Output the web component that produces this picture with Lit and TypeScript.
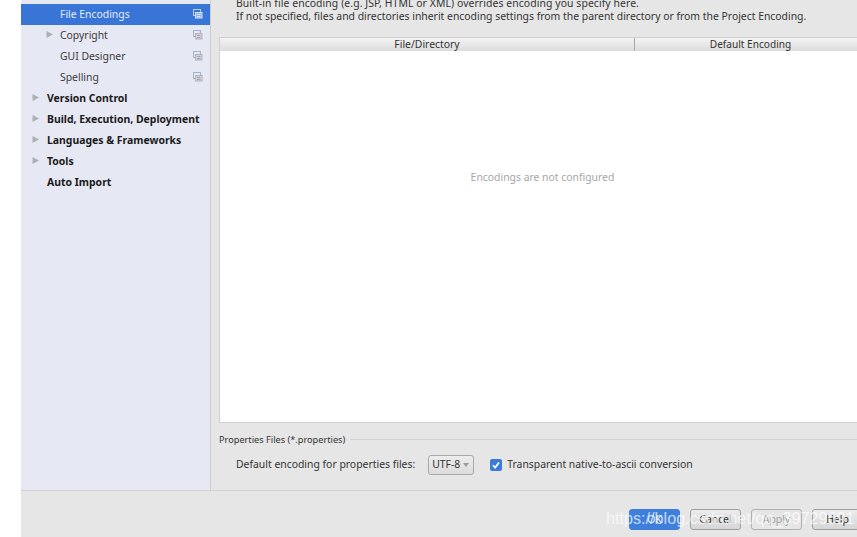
import { LitElement, html, css, svg } from "lit";
import { customElement } from "lit/decorators.js";

const copyIcon = (sel: boolean) => html`<svg class="copy" width="10" height="10" viewBox="0 0 10 10">
  <rect x="0.5" y="0.5" width="7" height="6" fill="none" stroke="${sel ? "#b9d0f2" : "#9fb4cf"}"/>
  <rect x="2.5" y="3.5" width="6.5" height="5.5" fill="${sel ? "#8fb2e8" : "#d3d3db"}" stroke="${sel ? "#d5e2f7" : "#b4b1bc"}"/>
  ${svg`<path d="M4 5.5h3.5M4 7.5h3.5" stroke="${sel ? "#dce7f8" : "#a5a5ae"}"/>`}
</svg>`;

const arrow = html`<svg class="arrow" width="8" height="9" viewBox="0 0 8 9"><path d="M0.5 1 L7 4.5 L0.5 8 Z" fill="#aeb0b6"/></svg>`;

@customElement("app-root")
export class AppRoot extends LitElement {
  static styles = css`
    :host { display: block; width: 857px; height: 537px; position: relative; overflow: hidden; background: #fff;
      font-family: "Noto Sans", "Open Sans", sans-serif; font-size: 10.4px; color: #2b2b2b; }
    .shell { margin-left: 21px; height: 537px; display: flex; flex-direction: column; background: #e6e6e6; }
    .main { height: 490px; display: flex; overflow: hidden; border-bottom: 1px solid #d0d0d0; box-sizing: content-box; }
    .side { width: 189px; flex: none; background: #e6e9f3; border-right: 1px solid #cdcdcd; padding-top: 4px; box-sizing: content-box; }
    .row { height: 21px; display: flex; align-items: center; position: relative; white-space: nowrap; padding-bottom: 2px; box-sizing: border-box; }
    .row.sel { background: #3875d7; color: #e8eefa; }
    .arrow-slot { width: 8px; display: flex; flex: none; }
    .l1 { padding-left: 11px; }
    .l1 .label { margin-left: 7px; font-weight: 700; color: #1a1a1a; font-size: 10.45px; }
    .l2 { padding-left: 25px; }
    .l2 .label { margin-left: 6px; color: #3a3a3a; }
    .sel .label { color: #e8eefa; }
    .copy { position: absolute; right: 7px; top: 5px; }
    .content { flex: 1; min-width: 0; padding: 0 0 0 8px; display: flex; flex-direction: column; }
    .intro { margin: -3px 0 0 17px; line-height: 13px; color: #333; white-space: nowrap; font-size: 10.4px; box-sizing: content-box; height: 40px; }
    .first { letter-spacing: 0.09px; }
    .table { width: 638px; height: 386px; flex: none; background: #fff; border: 1px solid #cfcfcf; border-right: 0; box-sizing: border-box; display: flex; flex-direction: column; }
    .thead { height: 13px; flex: none; display: flex; background: linear-gradient(#f4f4f4, #dcdcdc); color: #333; line-height: 12px; }
    .th1 { width: 414px; text-align: center; border-right: 1px solid #a9a9a9; }
    .th2 { flex: 1; text-align: center; padding-left: 9px; font-size: 10.1px; }
    .empty { flex: 1; text-align: center; color: #a6a6a6; padding: 119px 0 0 8px; }
    .props { margin-top: 11px; display: flex; align-items: center; gap: 5px; height: 11px; color: #333; font-size: 9.2px; white-space: nowrap; }
    .rule { flex: 1; height: 1px; background: #d2d2d2; }
    .form { display: flex; align-items: center; margin: 10px 0 0 17px; height: 20px; white-space: nowrap; color: #333; }
    .form > span:first-child, .check-label { position: relative; top: -1px; }
    .combo { margin-left: 13px; width: 46px; height: 20px; box-sizing: border-box; border: 1px solid #a9a9a9; border-radius: 3px; background: linear-gradient(#ededed, #dcdcdc); display: flex; align-items: center; padding: 0 0 2px 3px; gap: 3px; font-size: 10.4px; }
    .caret { width: 0; height: 0; margin-top: 2px; border-left: 3.5px solid transparent; border-right: 3.5px solid transparent; border-top: 4px solid #9a9a9a; }
    .check { margin-left: 16px; width: 12px; height: 12px; border-radius: 2px; background: #3d7bd9; display: flex; align-items: center; justify-content: center; }
    .check-label { margin-left: 5px; }
    .foot { flex: 1; display: flex; justify-content: flex-end; gap: 10px; padding: 18px 0 0 0; margin-right: -6px; }
    .btn { width: 51px; height: 21px; box-sizing: border-box; border: 1px solid #9f9f9f; border-radius: 3px; background: linear-gradient(#ececec, #d6d6d6); display: flex; align-items: center; justify-content: center; color: #333; padding-bottom: 1px; }
    .btn.primary { background: #3f7fdc; border-color: #3f7fdc; color: #e8eefa; }
    .btn.disabled { background: #e6e6e6; color: #a0a0a0; border-color: #b0b0b0; }
    .wm { position: absolute; left: 606px; top: 508px; font-family: "Liberation Sans", sans-serif; font-size: 16.2px; line-height: 20px; color: rgba(255,255,255,0.7); white-space: nowrap; }
  `;

  render() {
    const l2 = [["File Encodings", false, true], ["Copyright", true, false], ["GUI Designer", false, false], ["Spelling", false, false]] as const;
    const l1 = [["Version Control", true], ["Build, Execution, Deployment", true], ["Languages & Frameworks", true], ["Tools", true], ["Auto Import", false]] as const;
    return html`
      <div class="shell">
        <div class="main">
          <div class="side">
            ${l2.map(([t, a, s]) => html`<div class="row l2 ${s ? "sel" : ""}">
              <span class="arrow-slot">${a ? arrow : ""}</span><span class="label">${t}</span>${copyIcon(s)}
            </div>`)}
            ${l1.map(([t, a]) => html`<div class="row l1">
              <span class="arrow-slot">${a ? arrow : ""}</span><span class="label">${t}</span>
            </div>`)}
          </div>
          <div class="content">
            <div class="intro">
              <div class="first">Built-in file encoding (e.g. JSP, HTML or XML) overrides encoding you specify here.</div>
              <div>If not specified, files and directories inherit encoding settings from the parent directory or from the Project Encoding.</div>
            </div>
            <div class="table">
              <div class="thead"><div class="th1">File/Directory</div><div class="th2">Default Encoding</div></div>
              <div class="empty">Encodings are not configured</div>
            </div>
            <div class="props"><span>Properties Files (*.properties)</span><span class="rule"></span></div>
            <div class="form">
              <span>Default encoding for properties files:</span>
              <span class="combo">UTF-8<span class="caret"></span></span>
              <span class="check"><svg width="10" height="10" viewBox="0 0 10 10"><path d="M2 5.2 L4.2 7.6 L8 2.4" fill="none" stroke="#fff" stroke-width="1.7"/></svg></span>
              <span class="check-label">Transparent native-to-ascii conversion</span>
            </div>
          </div>
        </div>
        <div class="foot">
          <div class="btn primary">OK</div>
          <div class="btn">Cancel</div>
          <div class="btn disabled">Apply</div>
          <div class="btn">Help</div>
        </div>
      </div>
      <div class="wm">https://blog.csdn.net/qq_39729691</div>
    `;
  }
}
